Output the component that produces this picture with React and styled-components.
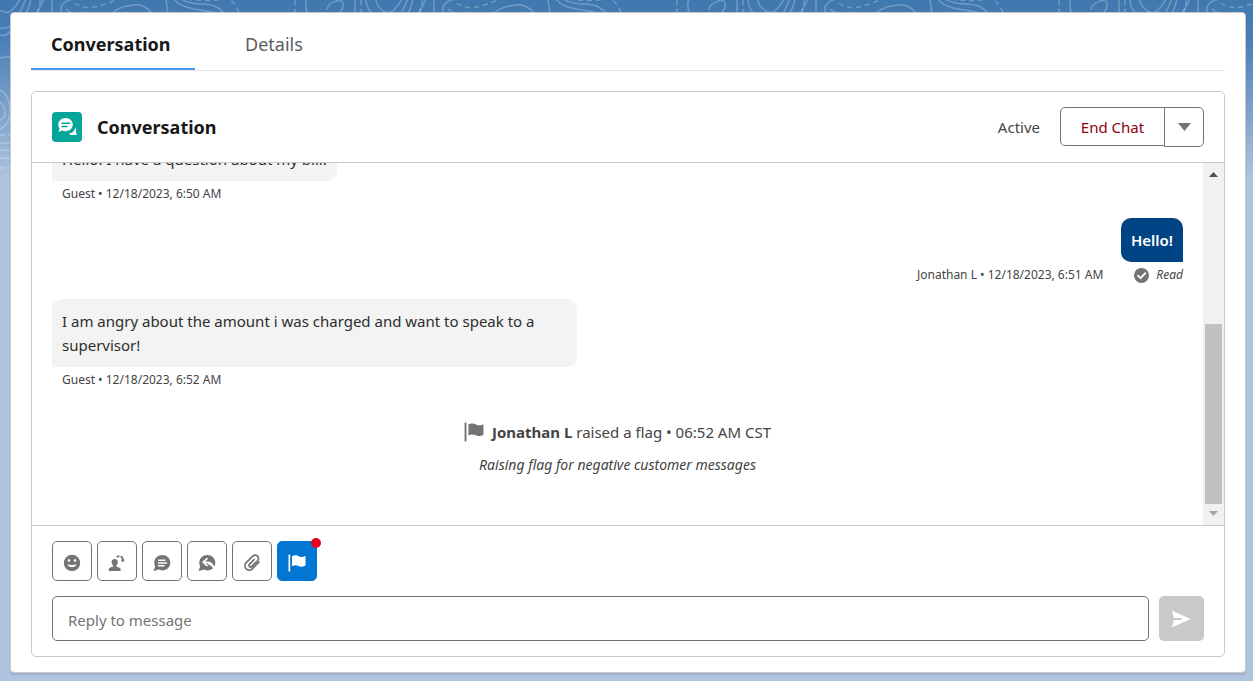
import React from "react";
import styled, { createGlobalStyle, css } from "styled-components";

const Global = createGlobalStyle`
  * { box-sizing: border-box; }
  body { margin: 0; font-family: "Noto Sans", "Open Sans", sans-serif; font-size: 15px; color: #444; background: #b0c4df; }
  button, input { font: inherit; }
  p, h1, h2 { margin: 0; }
`;

const Page = styled.div`
  position: relative;
  height: 100vh;
  display: flex;
  padding: 12px 7px 8px 10px;
  background: linear-gradient(#3f78ae 0, #4a7fb8 40px, #b0c4df 180px);
`;

const Backdrop = styled.svg`
  position: absolute;
  inset: 0;
  width: 100%;
  height: 280px;
  fill: none;
  stroke: #fff;
  stroke-opacity: 0.25;
  stroke-width: 1.5;
`;

const Card = styled.main`
  position: relative;
  flex: 1;
  min-width: 0;
  display: flex;
  flex-direction: column;
  padding: 0 20px 15px;
  background: #fff;
  border: 1px solid #c9c9c9;
  border-radius: 4px;
  box-shadow: 0 2px 2px rgba(0, 0, 0, 0.1);
`;

const Tabs = styled.nav`
  display: flex;
  gap: 30px;
  height: 58px;
  flex: none;
  border-bottom: 1px solid #e5e5e5;
`;

const Tab = styled.button`
  min-width: 164px;
  padding: 6px 20px 0;
  border: 0;
  border-bottom: 2px solid ${(p) => (p.$active ? "#4b95f5" : "transparent")};
  background: none;
  text-align: left;
  font-size: 18px;
  font-weight: ${(p) => (p.$active ? 700 : 400)};
  color: ${(p) => (p.$active ? "#181818" : "#5c5c5c")};
`;

const Panel = styled.section`
  flex: 1;
  min-height: 0;
  display: flex;
  flex-direction: column;
  margin-top: 20px;
  border: 1px solid #c9c9c9;
  border-radius: 5px;
`;

const Header = styled.header`
  display: flex;
  align-items: center;
  height: 71px;
  flex: none;
  padding: 0 20px;
  border-bottom: 1px solid #c9c9c9;
`;

const AppIcon = styled.svg`
  width: 30px;
  height: 30px;
  margin-right: 15px;
`;

const Title = styled.h1`
  flex: 1;
  font-size: 18px;
  font-weight: 700;
  color: #181818;
`;

const Status = styled.span`
  margin-right: 20px;
`;

const ButtonGroup = styled.div`
  display: flex;
  align-items: flex-start;
`;

const EndButton = styled.button`
  width: 105px;
  height: 39px;
  padding: 0;
  border: 1px solid #747474;
  border-radius: 5px 0 0 5px;
  background: #fff;
  color: #8e030f;
`;

const MoreButton = styled.button`
  display: grid;
  place-items: center;
  width: 40px;
  height: 40px;
  margin-left: -1px;
  padding: 0;
  border: 1px solid #747474;
  border-radius: 0 5px 5px 0;
  background: #fff;
`;

const Body = styled.div`
  display: flex;
  flex: 1;
  min-height: 0;
`;

const Messages = styled.div`
  flex: 1;
  min-width: 0;
  display: flex;
  flex-direction: column;
  justify-content: flex-end;
  overflow: hidden;
  padding: 0 20px 44px;
`;

const Message = styled.article`
  display: flex;
  flex-direction: column;
  flex: none;
  align-items: ${(p) => (p.$own ? "flex-end" : "flex-start")};
  margin-bottom: 13px;
`;

const Bubble = styled.p`
  max-width: 525px;
  padding: 10px;
  line-height: 24px;
  border-radius: 10px;
  ${(p) =>
    p.$own
      ? css`
          background: #014486;
          color: #fff;
          font-weight: 600;
          border-bottom-right-radius: 0;
        `
      : css`
          background: #f3f3f3;
          color: #2e2e2e;
          border-bottom-left-radius: 0;
        `}
`;

const Meta = styled.div`
  display: flex;
  align-items: center;
  height: 24px;
  padding-left: 10px;
  font-size: 12px;
`;

const Receipt = styled.span`
  display: flex;
  align-items: center;
  gap: 6px;
  margin-left: 30px;
  font-style: italic;
`;

const Event = styled.div`
  flex: none;
  display: flex;
  flex-direction: column;
  align-items: center;
  gap: 1px;
  padding-top: 12px;
  line-height: 32px;
`;

const EventLine = styled.p`
  display: flex;
  align-items: center;
  gap: 8px;
  svg { color: #747474; }
`;

const Note = styled.p`
  font-size: 14px;
  font-style: italic;
`;

const ScrollTrack = styled.div`
  display: flex;
  flex-direction: column;
  align-items: center;
  width: 21px;
  padding: 9px 2px 9px;
  background: #f1f1f1;
`;

const ScrollThumb = styled.div`
  width: 17px;
  height: 180px;
  margin: auto 0 7px;
  background: #c1c1c1;
`;

const Composer = styled.footer`
  flex: none;
  padding: 15px 20px;
  border-top: 1px solid #c9c9c9;
`;

const Tools = styled.div`
  display: flex;
  gap: 5px;
  margin-bottom: 15px;
`;

const Tool = styled.button`
  position: relative;
  display: grid;
  place-items: center;
  width: 40px;
  height: 40px;
  padding: 3px 0 0;
  border: 1px solid ${(p) => (p.$active ? "#0176d3" : "#747474")};
  border-radius: 5px;
  background: ${(p) => (p.$active ? "#0176d3" : "#fff")};
  color: ${(p) => (p.$active ? "#fff" : "#747474")};
`;

const Dot = styled.span`
  position: absolute;
  top: -4px;
  right: -5px;
  width: 10px;
  height: 10px;
  border-radius: 50%;
  background: #ea001e;
`;

const ReplyRow = styled.form`
  display: flex;
  gap: 10px;
`;

const ReplyInput = styled.input`
  flex: 1;
  min-width: 0;
  height: 45px;
  padding: 3px 15px 0;
  border: 1px solid #747474;
  border-radius: 5px;
  &::placeholder { color: #747474; opacity: 1; }
`;

const SendButton = styled.button`
  display: grid;
  place-items: center;
  width: 45px;
  height: 45px;
  padding: 0;
  border: 0;
  border-radius: 5px;
  background: #c9c9c9;
`;

const Svg = ({ size = 18, children }) => (
  <svg width={size} height={size} viewBox="0 0 18 18" fill="currentColor" aria-hidden="true">
    {children}
  </svg>
);

const line = { fill: "none", stroke: "currentColor", strokeLinecap: "round", strokeLinejoin: "round" };

const Smile = () => (
  <Svg>
    <circle cx="9" cy="9" r="8.2" />
    <circle cx="6" cy="6.5" r="1.3" fill="#fff" />
    <circle cx="12" cy="6.5" r="1.3" fill="#fff" />
    <path d="M4.3 10.2c1 3.8 8.400 3.800 9.400 0q-4.700 1.600-9.400 0z" fill="#fff" />
  </Svg>
);

const Transfer = () => (
  <Svg>
    <path d="M6.700 5c1.900 0 3.100 1.300 3.100 3.100 0 1.500-.7 2.500-1.500 3.300v1.200l3.300 1.100c.7.300 1 .8 1 1.600v1.700H.8v-1.700c0-.8.3-1.300 1-1.600l3.300-1.100v-1.200C4.300 10.600 3.600 9.600 3.600 8.100 3.600 6.300 4.800 5 6.700 5z" />
    <path d="M8.800 3.200q1.200-1 2.700-1" {...line} strokeWidth="1.800" strokeLinecap="butt" />
    <path d="M12.600 2.300q2.400.8 2.200 4" {...line} strokeWidth="1.800" strokeLinecap="butt" />
    <path d="M12.600 5.700h4.400L14.800 8.300z" />
  </Svg>
);

const BubblePath = "M9.300 1c4.500 0 8 3.400 8 7.700s-3.500 7.700-8 7.700c-1.300 0-2.600-.3-3.700-.8L1.200 17c-.4.100-.6-.2-.5-.5l1.400-3.800C1.600 11.500 1.300 10.200 1.300 8.700 1.300 4.400 4.800 1 9.300 1z";

const QuickText = () => (
  <Svg>
    <path d={BubblePath} />
    <path d="M5.500 6.300H12M5.500 9H13.500M5.500 11.700H11" {...line} stroke="#fff" strokeWidth="1.400" />
  </Svg>
);

const QuickReply = () => (
  <Svg>
    <path d={BubblePath} />
    <path d="M9 4.700L5.200 8.200 9 11.500M5.500 8.200c5-.6 8.300 1.200 10.500 5.500" {...line} stroke="#fff" strokeWidth="1.700" />
    <path d="M11 7.500q4 1 5.500 6.500l2-1v4h-4l1-2q-1.500-3.500-6-5z" fill="#fff" />
  </Svg>
);

const Clip = () => (
  <Svg>
    <path
      d="M15.900 8.200l-6.600 6.600a4.300 4.300 0 0 1-6.100-6.100l6.600-6.600a3.300 3.300 0 0 1 4.700 4.700l-5.700 5.700a1.600 1.600 0 0 1-2.300-2.300L11 5.700"
      {...line}
      strokeWidth="1.800"
    />
  </Svg>
);

const Flag = ({ size }) => (
  <Svg size={size}>
    <rect x="0.500" y="0.500" width="1.700" height="17" rx=".6" />
    <path d="M4 2.300c3.200-1.900 5.200-.8 7.300.1 2 .9 3.400.7 5.400-.2.400-.2.800 0 .8.500v8.500c0 .3-.2.500-.4.600-6.400 2.900-6.800-2.400-13.100.4z" />
  </Svg>
);

const Check = () => (
  <Svg size={17}>
    <circle cx="9" cy="10" r="8" fill="#747474" />
    <path d="M5.300 10.200l2.700 2.700 5-5.300" {...line} stroke="#fff" strokeWidth="2" />
  </Svg>
);

const Triangle = ({ up, color, width, height }) => (
  <svg width={width} height={height} viewBox="0 0 10 6" preserveAspectRatio="none" aria-hidden="true">
    <path d={up ? "M0 6L5 0l5 6z" : "M0 0h10L5 6z"} fill={color} />
  </svg>
);

const Contours = () => (
  <Backdrop aria-hidden="true">
    <defs>
      <pattern id="contours" width="382" height="280" patternUnits="userSpaceOnUse">
        <path d="M0 10q7 5 12 0T20-1M0 28Q14 30 20 12L26-1M0 35q12 4 14-18M31-1q-2 9-5 14M44-1q-4 9-8 14" />
        <path d="M62 14C58 5 65 0 75-1M66 9c6 6 14 4 24 6M112 13c7-6 14-7 22-8s14 3 19 9M52 14V-1M166-1q1 8 2 15M174-1q6 8 20 10t26 5M181-1q8 5 22 5t22 10" />
        <path d="M75 3q8 6 19 4T118-1M187-1q22 3 34 0t18 14M38 14q1-9 3-15" strokeDasharray="5 4" />
        <path d="M307-1q-3 7 1 15M327 10c0-7 15-13 16-7s-2 8-4 11M355-1v15M366-1q0 8 6 15M376-1q0 6 6 11" />
        <path d="M295-1v15M361-1v15" strokeDasharray="6 4" />
        <path d="M0 58q9-2 12-1M0 90q9 4 10 19T0 129M0 102q5 5 5 11t-5 7M0 143h10M0 150h10M0 158h10" />
        <path d="M0 135h10M0 168h10" strokeDasharray="5 3" />
      </pattern>
    </defs>
    <rect width="100%" height="280" fill="url(#contours)" stroke="none" />
  </Backdrop>
);

export default function App() {
  return (
    <Page>
      <Global />
      <Contours />
      <Card>
        <Tabs>
          <Tab $active type="button">Conversation</Tab>
          <Tab type="button">Details</Tab>
        </Tabs>
        <Panel>
          <Header>
            <AppIcon viewBox="0 0 30 30" aria-hidden="true">
              <rect width="30" height="30" rx="4" fill="#06a59a" />
              <path d="M13.500 6c4.200 0 7.300 2.900 7.300 6.600s-3.100 6.600-7.300 6.600c-1.200 0-2.300-.2-3.300-.7L6.400 20l1.200-3.500c-.8-1.200-1.300-2.400-1.300-3.900C6.300 8.900 9.400 6 13.500 6z" fill="#fff" />
              <path d="M23.300 15.300c1 1.700 1 3.700.7 5.200l1 2.400-3-.2c-1.800.6-4 .3-5.400-1 3.800-.3 6.100-2.900 6.700-6.400z" fill="#fff" />
              <path d="M10 11.300h7.500M10 14.500h5" stroke="#06a59a" strokeWidth="1.500" strokeLinecap="round" />
            </AppIcon>
            <Title>Conversation</Title>
            <Status>Active</Status>
            <ButtonGroup>
              <EndButton type="button">End Chat</EndButton>
              <MoreButton type="button" aria-label="More actions">
                <Triangle color="#747474" width={13} height={8} />
              </MoreButton>
            </ButtonGroup>
          </Header>
          <Body>
            <Messages>
              <Message>
                <Bubble>Hello! I have a question about my bill.</Bubble>
                <Meta>Guest • 12/18/2023, 6:50 AM</Meta>
              </Message>
              <Message $own>
                <Bubble $own>Hello!</Bubble>
                <Meta>
                  Jonathan L • 12/18/2023, 6:51 AM
                  <Receipt><Check />Read</Receipt>
                </Meta>
              </Message>
              <Message>
                <Bubble>I am angry about the amount i was charged and want to speak to a supervisor!</Bubble>
                <Meta>Guest • 12/18/2023, 6:52 AM</Meta>
              </Message>
              <Event>
                <EventLine>
                  <Flag size={20} />
                  <span><b>Jonathan L</b> raised a flag • 06:52 AM CST</span>
                </EventLine>
                <Note>Raising flag for negative customer messages</Note>
              </Event>
            </Messages>
            <ScrollTrack aria-hidden="true">
              <Triangle up color="#505050" width={9} height={5} />
              <ScrollThumb />
              <Triangle color="#a3a3a3" width={9} height={5} />
            </ScrollTrack>
          </Body>
          <Composer>
            <Tools>
              <Tool type="button" aria-label="Emoji"><Smile /></Tool>
              <Tool type="button" aria-label="Transfer"><Transfer /></Tool>
              <Tool type="button" aria-label="Quick text"><QuickText /></Tool>
              <Tool type="button" aria-label="Quick reply"><QuickReply /></Tool>
              <Tool type="button" aria-label="Attach file"><Clip /></Tool>
              <Tool $active type="button" aria-label="Raise flag"><Flag size={18} /><Dot /></Tool>
            </Tools>
            <ReplyRow>
              <ReplyInput aria-label="Reply to message" placeholder="Reply to message" />
              <SendButton type="button" aria-label="Send">
                <svg width="19" height="16" viewBox="0 0 19 16" fill="#fff" aria-hidden="true">
                  <path d="M.8 0L18.500 8 .8 16c-.4 0-.7-.3-.6-.7L1.900 9H9.500V7H1.900L.2.700C.1.300.4 0 .8 0z" />
                </svg>
              </SendButton>
            </ReplyRow>
          </Composer>
        </Panel>
      </Card>
    </Page>
  );
}
